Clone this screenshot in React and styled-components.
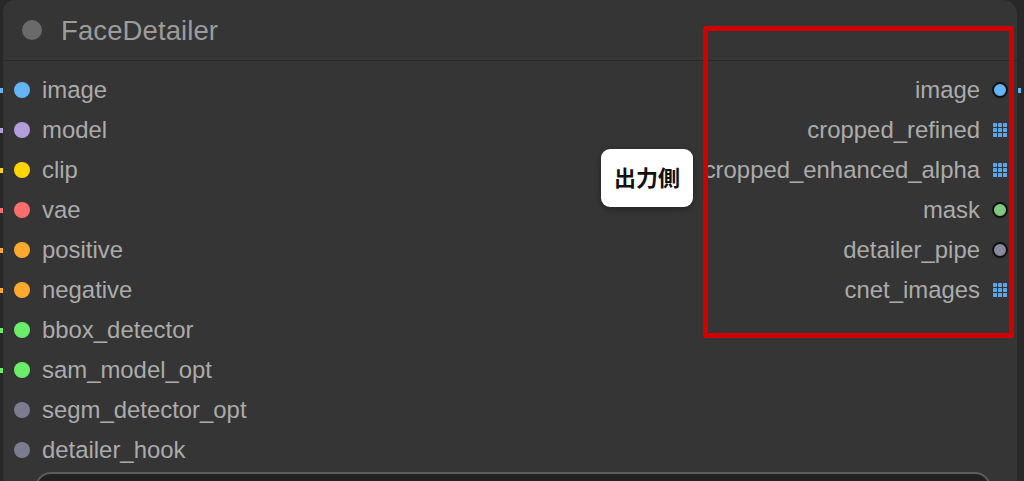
import React from "react";
import styled, { createGlobalStyle } from "styled-components";

const Global = createGlobalStyle`
  html, body { margin: 0; padding: 0; background: #282828; overflow: hidden; }
  body { font-family: "Liberation Sans", Arial, sans-serif; }
`;

const Page = styled.div`
  width: 1024px;
  height: 481px;
  display: flex;
  padding-left: 3px;
  box-sizing: border-box;
  overflow: hidden;
`;

const Node = styled.div`
  position: relative;
  width: 1014px;
  height: 520px;
  background: #353535;
  border-radius: 12px 14px 0 0;
  display: flex;
  flex-direction: column;
`;

const Title = styled.div`
  height: 60px;
  border-bottom: 1px solid #292929;
  display: flex;
  align-items: center;
  gap: 19px;
  padding-left: 19px;
  box-sizing: content-box;
`;

const TitleDot = styled.span`
  width: 20px;
  height: 20px;
  border-radius: 50%;
  background: #6a6a6a;
`;

const TitleText = styled.span`
  font-size: 27.5px;
  color: #9c9c9c;
  letter-spacing: 0.1px;
  margin-top: 1px;
`;

const Body = styled.div`
  display: grid;
  grid-template-columns: 1fr 1fr;
  padding-top: 9px;
`;

const Column = styled.div`
  display: flex;
  flex-direction: column;
`;

const Row = styled.div`
  position: relative;
  height: 40px;
  display: flex;
  align-items: center;
  justify-content: ${(p) => (p.$out ? "flex-end" : "flex-start")};
  gap: 12px;
  padding: ${(p) => (p.$out ? "0 9px 0 0" : "0 0 0 11px")};
`;

const Label = styled.span`
  font-size: 23.9px;
  color: #ababab;
  white-space: nowrap;
  line-height: 1;
`;

const Dot = styled.span`
  position: relative;
  width: ${(p) => (p.$outline ? "12px" : "16px")};
  height: ${(p) => (p.$outline ? "12px" : "16px")};
  border-radius: 50%;
  background: ${(p) => p.$color};
  border: ${(p) => (p.$outline ? "2px solid #111" : "none")};
  flex: none;
`;

const Stub = styled.span`
  position: absolute;
  top: 50%;
  width: 3px;
  height: 5px;
  margin-top: -2px;
  background: ${(p) => p.$color};
  ${(p) => (p.$right ? "right: -4px;" : "left: -3px;")}
`;

const Grid = styled.span`
  display: grid;
  grid-template-columns: repeat(3, 4px);
  grid-auto-rows: 4px;
  gap: 1px;
  width: 14px;
  height: 14px;
  flex: none;
  margin: 0 1px 0 1px;
  & > i {
    background: #5aa6ea;
    border-radius: 0.5px;
  }
`;

const Widget = styled.div`
  margin: 2px 26px 0 32px;
  height: 40px;
  border: 2px solid #5c5c5c;
  border-radius: 16px;
  background: #222;
`;

const Highlight = styled.div`
  position: absolute;
  left: 700px;
  top: 26px;
  width: 301px;
  height: 302px;
  border: 5px solid #d10000;
  border-radius: 2px;
  pointer-events: none;
`;

const Callout = styled.div`
  position: absolute;
  left: 598px;
  top: 149px;
  width: 92px;
  height: 58px;
  background: #fff;
  border-radius: 9px;
  box-shadow: 0 2px 6px rgba(0, 0, 0, 0.35);
  display: flex;
  align-items: center;
  justify-content: center;
  font-family: "Noto Sans CJK JP", sans-serif;
  font-weight: 700;
  font-size: 22px;
  color: #111;
  padding-bottom: 5px;
  box-sizing: border-box;
`;

const inputs = [
  ["image", "#64b5f6"],
  ["model", "#b39ddb"],
  ["clip", "#ffd500"],
  ["vae", "#ff6e6e"],
  ["positive", "#ffa931"],
  ["negative", "#ffa931"],
  ["bbox_detector", "#6aee6a"],
  ["sam_model_opt", "#6aee6a"],
  ["segm_detector_opt", "#7c7c90", true],
  ["detailer_hook", "#7c7c90", true],
];

const outputs = [
  ["image", "dot", "#64b5f6", true],
  ["cropped_refined", "grid"],
  ["cropped_enhanced_alpha", "grid"],
  ["mask", "dot", "#81c784"],
  ["detailer_pipe", "dot", "#8a8a9e"],
  ["cnet_images", "grid"],
];

function GridIcon() {
  return (
    <Grid>
      {Array.from({ length: 9 }).map((_, i) => (
        <i key={i} />
      ))}
    </Grid>
  );
}

export default function App() {
  return (
    <>
      <Global />
      <Page>
        <Node>
          <Title>
            <TitleDot />
            <TitleText>FaceDetailer</TitleText>
          </Title>
          <Body>
            <Column>
              {inputs.map(([name, color, noStub]) => (
                <Row key={name}>
                  {!noStub && <Stub $color={color} />}
                  <Dot $color={color} />
                  <Label>{name}</Label>
                </Row>
              ))}
            </Column>
            <Column>
              {outputs.map(([name, kind, color, stub]) => (
                <Row key={name} $out>
                  <Label>{name}</Label>
                  {kind === "grid" ? (
                    <GridIcon />
                  ) : (
                    <Dot $color={color} $outline />
                  )}
                  {stub && <Stub $color={color} $right />}
                </Row>
              ))}
            </Column>
          </Body>
          <Widget />
          <Highlight />
          <Callout>出力側</Callout>
        </Node>
      </Page>
    </>
  );
}
